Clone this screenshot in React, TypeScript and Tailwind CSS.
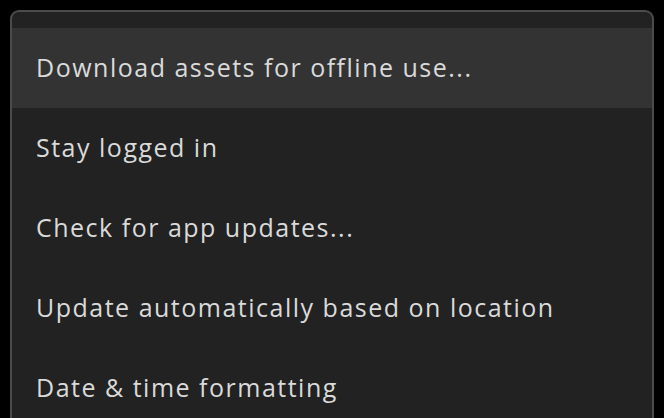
import React from 'react';

const items = [
  'Download assets for offline use...',
  'Stay logged in',
  'Check for app updates...',
  'Update automatically based on location',
  'Date & time formatting',
];

export default function App() {
  return (
    <div className="h-[418px] w-[664px] overflow-hidden bg-black pl-[10px] pt-[10px] pr-[10px]">
      <div className="rounded-t-[9px] border-2 border-b-0 border-[#4b4b4b] bg-[#222222] pt-[16px] pb-4">
        {items.map((label, i) => (
          <div
            key={label}
            className={`flex h-[80px] items-center pl-[24px] text-[25px] tracking-[1.5px] text-[#dadada] font-['Open_Sans',sans-serif] ${
              i === 0 ? 'bg-[#333333]' : ''
            }`}
          >
            {label}
          </div>
        ))}
      </div>
    </div>
  );
}
